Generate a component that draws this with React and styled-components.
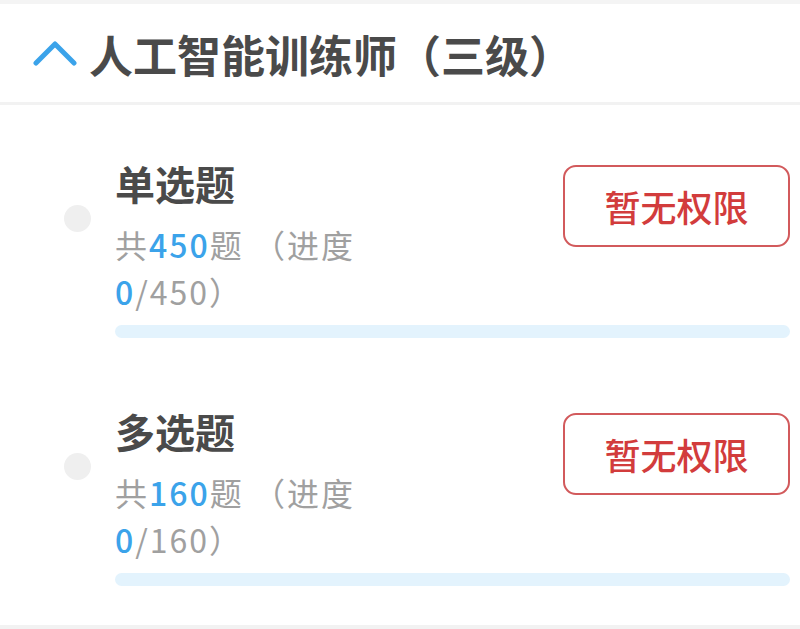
import styled, { createGlobalStyle } from "styled-components"

const GlobalStyle = createGlobalStyle`
  html, body {
    margin: 0;
    padding: 0;
    background: #ffffff;
  }
  body {
    font-family: "Noto Sans CJK SC", "Noto Sans", sans-serif;
  }
`

const levels = [
  { name: "单选题", total: 450, done: 0 },
  { name: "多选题", total: 160, done: 0 },
]

const ChevronUp = () => (
  <svg width="44" height="26" viewBox="0 0 44 26">
    <polyline
      points="3,23 22,4 41,23"
      fill="none"
      stroke="#3ba3ea"
      strokeWidth="5"
      strokeLinecap="round"
      strokeLinejoin="round"
    />
  </svg>
)

const App = () => {
  return (
    <Page>
      <GlobalStyle />
      <Header>
        <ChevronUp />
        <Title>人工智能训练师（三级）</Title>
      </Header>
      <List>
        {levels.map((item) => (
          <Item key={item.name}>
            <Dot />
            <Content>
              <Row>
                <Info>
                  <ItemName>{item.name}</ItemName>
                  <Meta>
                    共<Num>{item.total}</Num>题 （进度<Num>{item.done}</Num>/
                    {item.total}）
                  </Meta>
                </Info>
                <LockButton>暂无权限</LockButton>
              </Row>
              <Track>
                <Fill style={{ width: `${(item.done / item.total) * 100}%` }} />
              </Track>
            </Content>
          </Item>
        ))}
      </List>
    </Page>
  )
}

const Page = styled.div`
  min-height: 629px;
  border-top: 4px solid #f4f4f4;
  box-sizing: border-box;
  background: #ffffff;
`

const Header = styled.div`
  display: flex;
  align-items: center;
  gap: 12px;
  height: 101px;
  padding-left: 33px;
  border-bottom: 3px solid #f2f2f2;
  box-sizing: border-box;
`

const Title = styled.h1`
  margin: 0;
  font-size: 44px;
  line-height: 1;
  font-weight: 700;
  color: #4a4a4a;
  padding-top: 2px;
`

const List = styled.div`
  padding-bottom: 24px;
  border-bottom: 4px solid #f2f2f2;
`

const Item = styled.div`
  display: flex;
  align-items: flex-start;
  padding: 50px 10px 15px 64px;
`

const Dot = styled.span`
  flex: none;
  width: 27px;
  height: 27px;
  margin-top: 50px;
  margin-right: 24px;
  border-radius: 50%;
  background: #efefef;
`

const Content = styled.div`
  flex: 1;
  display: flex;
  flex-direction: column;
`

const Row = styled.div`
  display: flex;
  justify-content: space-between;
  align-items: flex-start;
`

const Info = styled.div`
  width: 290px;
`

const ItemName = styled.div`
  font-size: 40px;
  line-height: 56px;
  font-weight: 700;
  color: #4a4a4a;
`

const Meta = styled.div`
  margin-top: 10px;
  font-size: 32px;
  line-height: 47px;
  color: #a0a0a0;
  letter-spacing: 2px;
`

const Num = styled.span`
  color: #3ba3ea;
  font-weight: 500;
`

const LockButton = styled.button`
  margin-top: 10px;
  width: 227px;
  height: 82px;
  border: 2px solid #d25a5c;
  border-radius: 13px;
  background: #ffffff;
  color: #d23c3c;
  font-family: inherit;
  font-size: 36px;
  font-weight: 500;
  cursor: pointer;
`

const Track = styled.div`
  margin-top: 10px;
  height: 13px;
  border-radius: 7px;
  background: #e3f3fd;
  overflow: hidden;
`

const Fill = styled.div`
  height: 100%;
  background: #3ba3ea;
`

export default App
